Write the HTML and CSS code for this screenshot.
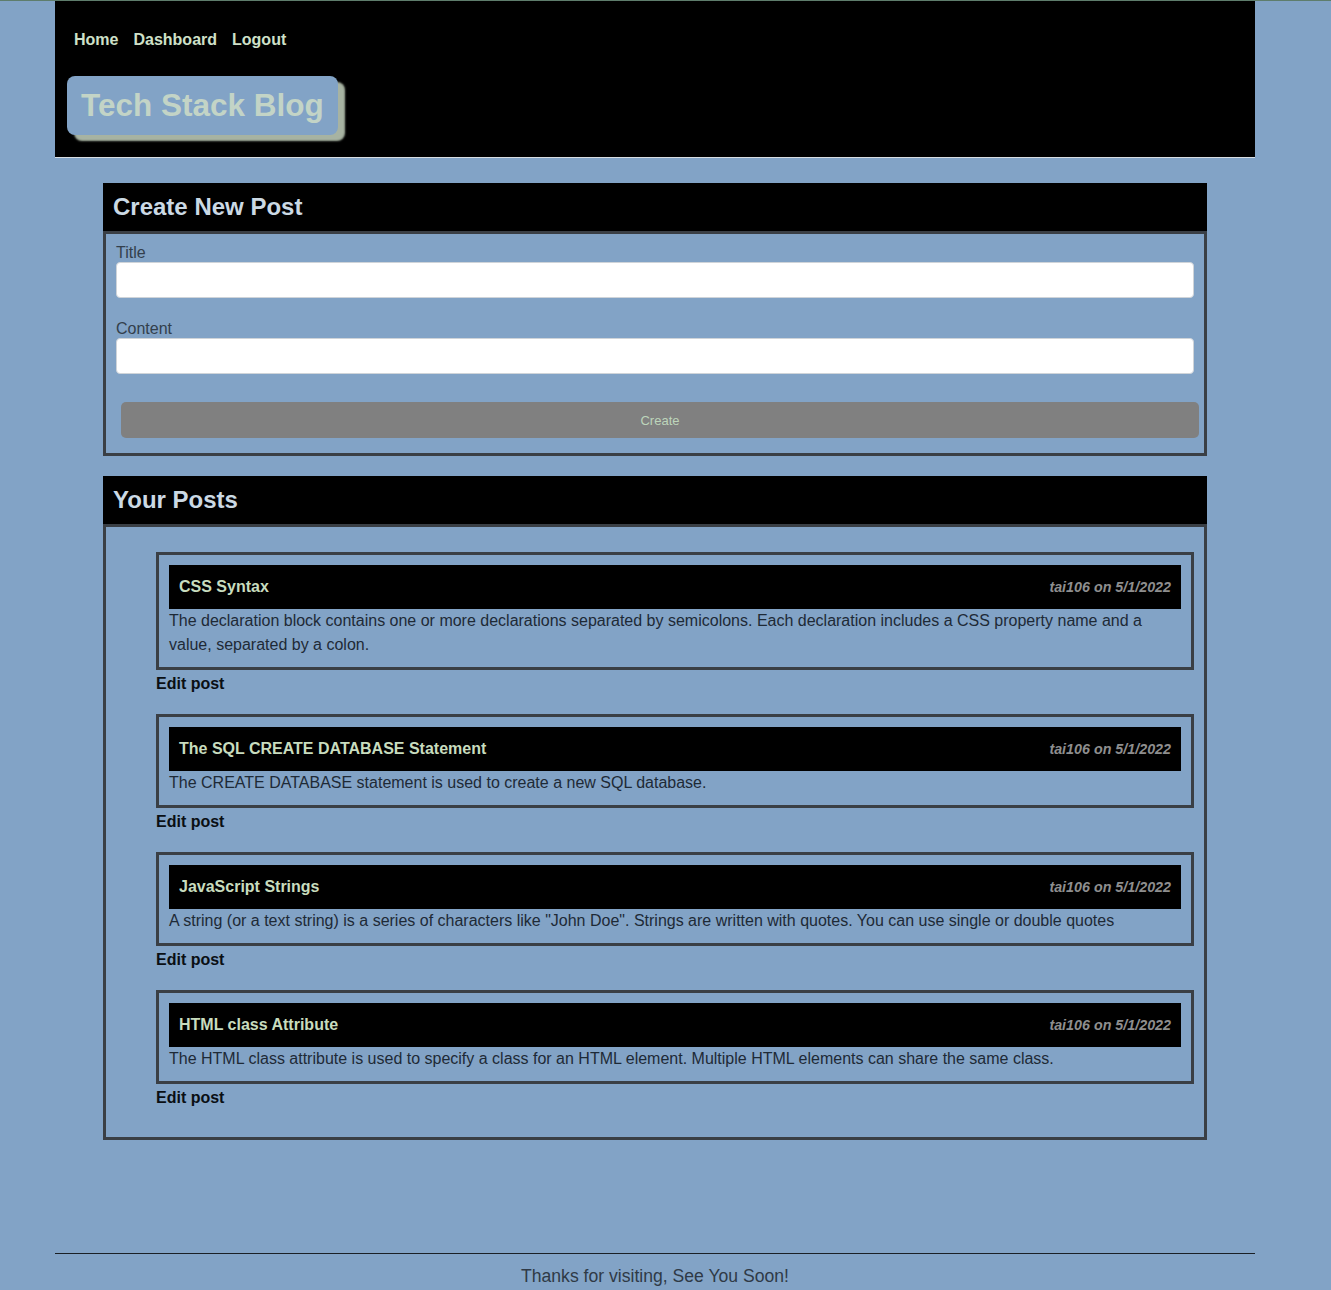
FILE: index.html
```html
<!DOCTYPE html>
<html lang="en">
<head>
<meta charset="utf-8">
<title>Tech Stack Blog</title>
<link rel="stylesheet" href="styles.css">
</head>
<body>
<div class="page">
  <header class="site-header">
    <nav class="nav">
      <a href="#">Home</a>
      <a href="#">Dashboard</a>
      <a href="#">Logout</a>
    </nav>
    <h1 class="brand">Tech Stack Blog</h1>
  </header>

  <main class="main">
    <section class="panel">
      <h2 class="panel-title">Create New Post</h2>
      <form class="panel-body form">
        <div class="group">
          <label class="label" for="title">Title</label>
          <input class="input" id="title" type="text">
        </div>
        <div class="group">
          <label class="label" for="content">Content</label>
          <input class="input" id="content" type="text">
        </div>
        <button class="btn" type="button">Create</button>
      </form>
    </section>

    <section class="panel panel-posts">
      <h2 class="panel-title">Your Posts</h2>
      <div class="panel-body">
        <ul class="posts">
          <li class="post-item">
            <article class="post">
              <div class="post-bar"><span class="post-title">CSS Syntax</span><span class="post-meta">tai106 on 5/1/2022</span></div>
              <p class="post-text">The declaration block contains one or more declarations separated by semicolons. Each declaration includes a CSS property name and a value, separated by a colon.</p>
            </article>
            <a class="edit" href="#">Edit post</a>
          </li>
          <li class="post-item">
            <article class="post">
              <div class="post-bar"><span class="post-title">The SQL CREATE DATABASE Statement</span><span class="post-meta">tai106 on 5/1/2022</span></div>
              <p class="post-text">The CREATE DATABASE statement is used to create a new SQL database.</p>
            </article>
            <a class="edit" href="#">Edit post</a>
          </li>
          <li class="post-item">
            <article class="post">
              <div class="post-bar"><span class="post-title">JavaScript Strings</span><span class="post-meta">tai106 on 5/1/2022</span></div>
              <p class="post-text">A string (or a text string) is a series of characters like "John Doe". Strings are written with quotes. You can use single or double quotes</p>
            </article>
            <a class="edit" href="#">Edit post</a>
          </li>
          <li class="post-item">
            <article class="post">
              <div class="post-bar"><span class="post-title">HTML class Attribute</span><span class="post-meta">tai106 on 5/1/2022</span></div>
              <p class="post-text">The HTML class attribute is used to specify a class for an HTML element. Multiple HTML elements can share the same class.</p>
            </article>
            <a class="edit" href="#">Edit post</a>
          </li>
        </ul>
      </div>
    </section>
  </main>

  <footer class="footer">Thanks for visiting, See You Soon!</footer>
</div>
</body>
</html>
```

FILE: styles.css
```css
* { box-sizing: border-box; }

html, body { margin: 0; padding: 0; }

body {
  background: #82a3c6;
  border-top: 1px solid #5e7d6c;
  font-family: "Liberation Sans", Arial, sans-serif;
  font-size: 16px;
  color: #1e2a36;
  min-height: 1290px;
}

.page {
  width: 1200px;
  margin-left: 55px;
}

.site-header {
  background: #000;
  border-bottom: 1px solid #d8dde2;
  height: 157px;
  padding: 30px 12px 0 12px;
}

.nav {
  display: flex;
  line-height: 18px;
}

.nav a {
  color: #cfe0c8;
  font-weight: bold;
  text-decoration: none;
  padding: 0 7px;
  margin-right: 1px;
}

.brand {
  display: inline-block;
  margin: 27px 0 0 0;
  padding: 11px 14px 12px 14px;
  background: #82a3c6;
  color: #c3d4c6;
  font-size: 31.5px;
  line-height: 36px;
  font-weight: bold;
  border-radius: 8px;
  box-shadow: 7px 6px 2px #a7b3a2;
}

.main {
  padding: 25px 48px 0 48px;
}

.panel {
  margin-bottom: 20px;
}

.panel-title {
  margin: 0;
  background: #000;
  color: #cbd9e4;
  font-size: 24px;
  line-height: 48px;
  height: 48px;
  padding: 0 10px;
  font-weight: bold;
}

.panel-body {
  border: 3px solid #3a3f45;
  padding: 10px;
}

.form .group {
  margin-bottom: 22px;
}

.form .group:last-of-type {
  margin-bottom: 0;
}

.label {
  display: block;
  color: #333f4c;
  font-size: 16px;
  line-height: 18px;
}

.input {
  display: block;
  width: 100%;
  height: 36px;
  border: 1px solid #cfd4d9;
  border-radius: 4px;
  background: #fff;
  font: inherit;
}

.btn {
  display: block;
  width: 100%;
  height: 36px;
  margin: 28px 0 5px 5px;
  border: none;
  border-radius: 5px;
  background: #808080;
  color: #bdd5bb;
  font-family: "Liberation Sans", Arial, sans-serif;
  font-size: 13px;
}

.posts {
  list-style: none;
  margin: 15px 0 0 0;
  padding: 0 0 0 40px;
}

.post-item {
  margin-bottom: 21px;
}

.post-item:last-child {
  margin-bottom: 20px;
}

.post {
  border: 3px solid #3a3f45;
  padding: 10px;
}

.post-bar {
  background: #000;
  height: 44px;
  display: flex;
  align-items: center;
  justify-content: space-between;
  padding: 0 10px;
}

.post-title {
  color: #c8dcbe;
  font-weight: bold;
  font-size: 16px;
}

.post-meta {
  color: #8e8e8e;
  font-style: italic;
  font-weight: bold;
  font-size: 14.3px;
}

.post-text {
  margin: 0;
  line-height: 24px;
  color: #1e2a36;
}

.edit {
  display: block;
  padding-top: 5px;
  line-height: 18px;
  color: #0a0f14;
  font-weight: bold;
  text-decoration: none;
}

.footer {
  margin-top: 113px;
  border-top: 1px solid #1a1f24;
  text-align: center;
  color: #2f3a46;
  font-size: 17.6px;
  padding-top: 12px;
  line-height: 20px;
}
```
